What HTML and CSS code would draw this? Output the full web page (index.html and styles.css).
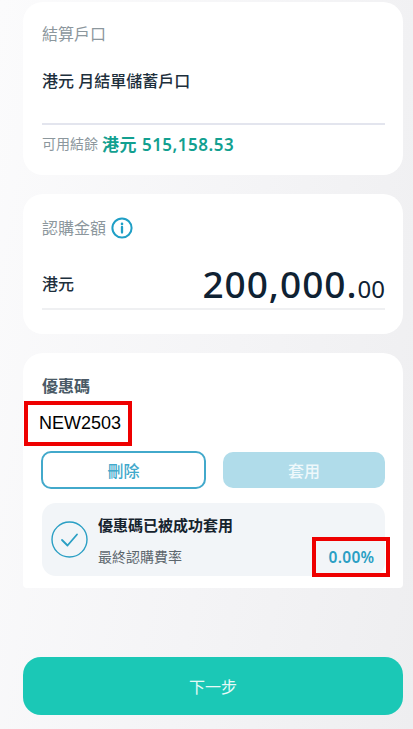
FILE: index.html
```html
<!DOCTYPE html>
<html lang="zh-Hant">

<head>
    <meta charset="UTF-8">
    <meta name="viewport" content="width=device-width, initial-scale=1.0">
    <title>認購</title>
    <link rel="stylesheet" href="styles.css">
</head>

<body>
    <div class="page">
        <!-- 結算戶口 -->
        <section class="card accountCard">
            <h2 class="label">結算戶口</h2>
            <p class="accountName">港元 月結單儲蓄戶口</p>
            <div class="balance">
                <span class="balanceLabel">可用結餘</span>
                <span class="balanceValue">港元 515,158.53</span>
            </div>
        </section>

        <!-- 認購金額 -->
        <section class="card amountCard">
            <h2 class="label">認購金額
                <svg class="infoIcon" viewBox="0 0 22 22" width="22" height="22">
                    <circle cx="11" cy="11" r="9.6" fill="none" stroke="#1f9fc6" stroke-width="2"/>
                    <circle cx="11" cy="6.9" r="1.3" fill="#1f9fc6"/>
                    <path d="M11 10v5.6" stroke="#1f9fc6" stroke-width="2.3" stroke-linecap="round"/>
                </svg>
            </h2>
            <div class="amountRow">
                <span class="currency">港元</span>
                <span class="amount">200,000.<small>00</small></span>
            </div>
        </section>

        <!-- 優惠碼 -->
        <section class="card promoCard">
            <h2 class="promoTitle">優惠碼</h2>
            <div class="highlight codeBox">NEW2503</div>
            <div class="btns">
                <a href="#" class="btn deleteBtn">刪除</a>
                <a href="#" class="btn applyBtn">套用</a>
            </div>
            <div class="result">
                <svg class="checkIcon" viewBox="0 0 37 37" width="37" height="37">
                    <circle cx="18.5" cy="18.5" r="17.5" fill="none" stroke="#2a9fc4" stroke-width="1.4"/>
                    <path d="M11 19l5.5 5.5L26 13.5" fill="none" stroke="#2a9fc4" stroke-width="1.8" stroke-linecap="round" stroke-linejoin="round"/>
                </svg>
                <div class="resultText">
                    <p class="resultTitle">優惠碼已被成功套用</p>
                    <p class="resultSub">最終認購費率</p>
                </div>
                <div class="highlight rateBox">0.00%</div>
            </div>
        </section>

        <a href="#" class="nextBtn">下一步</a>
    </div>
</body>

</html>
```

FILE: styles.css
```css
/* reset */
* {
    margin: 0;
    box-sizing: border-box;
}

body {
    font-family: "Noto Sans", "Noto Sans CJK TC", sans-serif;
    color: #1d2f3c;
}

a {
    text-decoration: none;
}

/* page */
.page {
    display: flex;
    flex-direction: column;
    width: 413px;
    height: 729px;
    padding: 2px 10px 14px 23px;
    overflow: hidden;
    background: linear-gradient(100deg, #fbfbfc 0%, #f4f4f6 55%, #eeeef0 100%);
}

/* card */
.card {
    width: 380px;
    padding: 0 18px 0 19px;
    background: #fff;
    border-radius: 20px;
}

.label {
    display: flex;
    align-items: center;
    gap: 5px;
    font-size: 16px;
    font-weight: 400;
    line-height: 20px;
    color: #8c979d;
}

/* account */
.accountCard {
    height: 173px;
    padding-top: 22px;
}

.accountName {
    margin-top: 25px;
    padding-bottom: 30px;
    border-bottom: 2px solid #e3e5ee;
    font-size: 16px;
    font-weight: 500;
    line-height: 24px;
}

.balance {
    display: flex;
    align-items: center;
    gap: 4px;
    height: 24px;
    margin-top: 6px;
}

.balanceLabel {
    font-size: 14px;
    color: #8c979d;
}

.balanceValue {
    font-size: 17px;
    font-weight: 600;
    letter-spacing: .5px;
    color: #12a090;
}

/* amount */
.amountCard {
    height: 140px;
    margin-top: 19px;
    padding-top: 23px;
}

.amountRow {
    display: flex;
    justify-content: space-between;
    align-items: flex-end;
    height: 61px;
    margin-top: 10px;
    border-bottom: 2px solid #eff0f2;
}

.currency {
    padding-bottom: 14px;
    font-size: 16px;
    font-weight: 500;
    line-height: 20px;
}

.amount {
    font-size: 37px;
    font-weight: 500;
    letter-spacing: 1px;
    line-height: 38px;
    color: #0f2233;
}

.amount small {
    font-size: 24px;
    font-weight: 400;
    letter-spacing: 0;
}

/* promo */
.promoCard {
    height: 235px;
    margin-top: 19px;
    padding-top: 23px;
    border-radius: 20px 20px 4px 4px;
}

.promoTitle {
    font-size: 16px;
    font-weight: 600;
    line-height: 20px;
    color: #4a5a66;
}

.highlight {
    border: 4px solid #ee0000;
    background: transparent;
}

.codeBox {
    display: flex;
    align-items: center;
    width: 108px;
    height: 45px;
    margin: 5px 0 0 -18px;
    padding-left: 11px;
    font-family: "Liberation Sans", sans-serif;
    font-size: 18px;
    color: #000;
}

.btns {
    display: flex;
    gap: 17px;
    margin: 5px 0 0 -1px;
}

.btn {
    display: flex;
    justify-content: center;
    align-items: center;
    font-size: 16px;
    font-weight: 500;
    border-radius: 10px;
}

.deleteBtn {
    width: 165px;
    height: 38px;
    border: 2px solid #42a9cb;
    color: #42a9cb;
}

.applyBtn {
    width: 162px;
    height: 36px;
    margin-top: 1px;
    background: #b0dcea;
    color: #eef8fb;
}

.result {
    position: relative;
    display: flex;
    align-items: center;
    gap: 10px;
    height: 73px;
    margin-top: 14px;
    padding-left: 9px;
    background: #f2f5f8;
    border-radius: 14px;
}

.resultText {
    align-self: flex-start;
    padding-top: 12px;
}

.resultTitle {
    font-size: 15px;
    font-weight: 700;
    line-height: 20px;
    color: #16232e;
}

.resultSub {
    margin-top: 12px;
    font-size: 14px;
    line-height: 20px;
    color: #5c666d;
}

.rateBox {
    position: absolute;
    right: -5px;
    top: 34px;
    display: flex;
    justify-content: center;
    align-items: center;
    width: 78px;
    height: 40px;
    padding-left: 1px;
    font-size: 15.5px;
    font-weight: 600;
    letter-spacing: .3px;
    color: #2a9fc4;
}

/* next */
.nextBtn {
    display: flex;
    justify-content: center;
    align-items: center;
    width: 380px;
    height: 58px;
    margin-top: auto;
    background: #1bc8b6;
    border-radius: 18px;
    font-size: 16px;
    color: #e8faf7;
}
```
